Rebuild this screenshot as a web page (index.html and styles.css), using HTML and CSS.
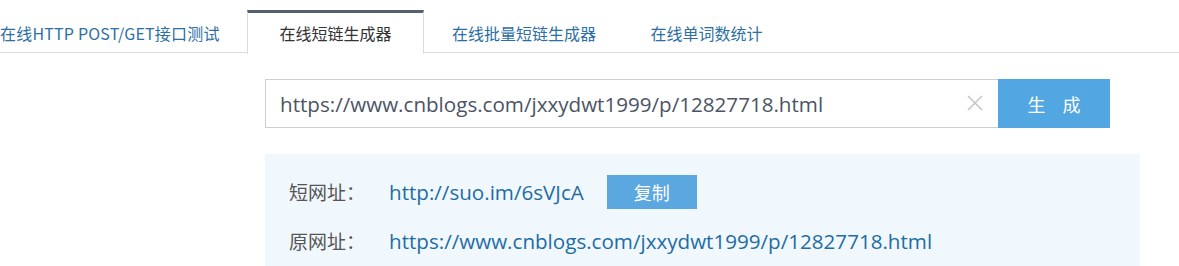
FILE: index.html
```html
<!DOCTYPE html>
<html lang="zh-CN">
<head>
<meta charset="utf-8">
<title>在线短链生成器</title>
<link rel="stylesheet" href="styles.css">
</head>
<body>
<nav class="tabbar">
  <ul class="tabs">
    <li class="tab tab-1"><a href="#">在线HTTP POST/GET接口测试</a></li>
    <li class="tab tab-active"><a href="#">在线短链生成器</a></li>
    <li class="tab tab-3"><a href="#">在线批量短链生成器</a></li>
    <li class="tab tab-4"><a href="#">在线单词数统计</a></li>
  </ul>
</nav>
<main class="main">
  <form class="gen-form">
    <div class="input-wrap">
      <input class="url-input" type="text" value="https://www.cnblogs.com/jxxydwt1999/p/12827718.html">
      <span class="clear-btn">
        <svg width="16" height="16" viewBox="0 0 16 16"><path d="M1 1 L15 15 M15 1 L1 15" stroke="#c4c4c4" stroke-width="1.5" fill="none"/></svg>
      </span>
    </div>
    <button class="gen-btn" type="button">生成</button>
  </form>
  <section class="result">
    <div class="row">
      <span class="label">短网址：</span>
      <a class="link" href="#">http://suo.im/6sVJcA</a>
      <button class="copy-btn" type="button">复制</button>
    </div>
    <div class="row">
      <span class="label">原网址：</span>
      <a class="link" href="#">https://www.cnblogs.com/jxxydwt1999/p/12827718.html</a>
    </div>
  </section>
</main>
</body>
</html>
```
FILE: styles.css
```css
* { box-sizing: border-box; }
html, body { margin: 0; padding: 0; background: #fff; }
body {
  font-family: "Open Sans", "Noto Sans CJK SC", sans-serif;
  overflow: hidden;
  width: 1179px;
  height: 266px;
}
.tabbar {
  padding-top: 10px;
  border-bottom: 1px solid #dcdcdc;
  height: 53px;
}
.tabs {
  list-style: none;
  margin: 0 0 0 -30px;
  padding: 0;
  display: flex;
  height: 43px;
}
.tab {
  height: 43px;
  border-top: 3px solid transparent;
  border-left: 1px solid transparent;
  border-right: 1px solid transparent;
  display: flex;
  align-items: center;
  justify-content: center;
  font-size: 16px;
  font-family: "Noto Sans CJK SC", "Open Sans", sans-serif;
}
.tab a { color: #2d6fa3; text-decoration: none; }
.tab-1 { width: 279px; margin-left: -2px; justify-content: flex-start; padding-left: 31px; }
.tab-1 a { letter-spacing: 0.2px; }
.tab-active {
  width: 177px;
  border-top-color: #585f70;
  border-left-color: #dcdcdc;
  border-right-color: #dcdcdc;
  background: #fff;
  height: 44px;
  padding-bottom: 1px;
}
.tab-active a { color: #333; }
.tab-3 { width: 200px; }
.tab-4 { width: 165px; }
.main { padding: 26px 0 0 265px; }
.gen-form { display: flex; height: 49px; }
.input-wrap {
  position: relative;
  width: 733px;
  height: 49px;
}
.url-input {
  width: 100%;
  height: 100%;
  border: 1px solid #cfcfcf;
  border-right: none;
  padding: 0 50px 0 14px;
  font-family: "Open Sans", sans-serif;
  font-size: 20.6px;
  color: #4b5465;
  outline: none;
}
.clear-btn {
  position: absolute;
  left: 702px;
  top: 16px;
  width: 16px;
  height: 16px;
  display: block;
}
.clear-btn svg { display: block; }
.gen-btn {
  width: 112px;
  height: 49px;
  border: none;
  background: #52a6e1;
  color: #fff;
  font-family: "Noto Sans CJK SC", sans-serif;
  font-size: 18px;
  letter-spacing: 17px;
  padding: 0 0 0 17px;
  cursor: pointer;
}
.result {
  margin-top: 26px;
  width: 875px;
  background: #f1f8fd;
  padding: 13px 0 0 24px;
  height: 120px;
}
.row {
  display: flex;
  align-items: center;
  height: 49px;
}
.label {
  width: 100px;
  font-family: "Noto Sans CJK SC", sans-serif;
  font-size: 19px;
  color: #555;
}
.link {
  font-family: "Open Sans", sans-serif;
  font-size: 20.6px;
  color: #226ca3;
  text-decoration: none;
}
.copy-btn {
  margin-left: 23px;
  width: 90px;
  height: 34px;
  border: none;
  background: #5ba7df;
  color: #fff;
  font-family: "Noto Sans CJK SC", sans-serif;
  font-size: 18px;
  padding: 0;
  cursor: pointer;
}
```
